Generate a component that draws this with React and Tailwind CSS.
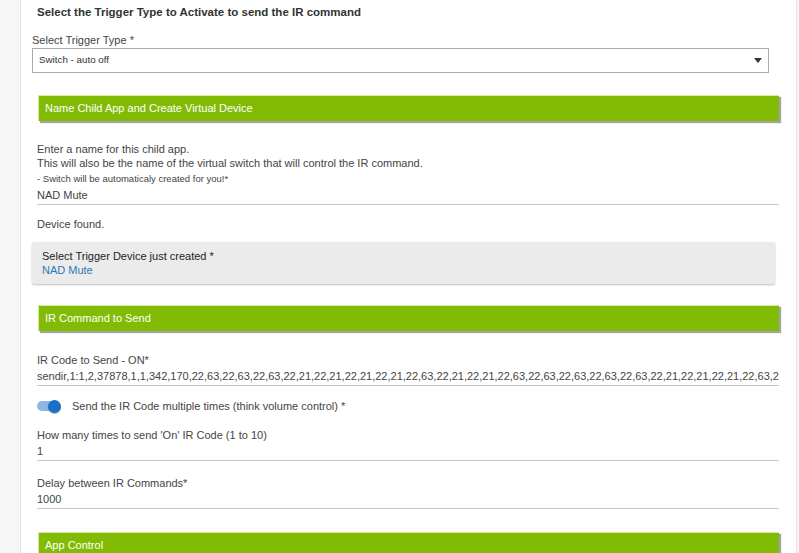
import React from 'react';

const code =
  'sendir,1:1,2,37878,1,1,342,170,22,63,22,63,22,63,22,21,22,21,22,21,22,21,22,63,22,21,22,21,22,63,22,63,22,63,22,63,22,63,22,21,22,21,22,21,22,63,22,2';

function GreenHeader({ title, className = '' }) {
  return (
    <div
      className={`ml-[17px] w-[741px] h-[26px] bg-[#82bb03] border-t border-l border-[#d9ea9c] shadow-[2px_2px_1px_#a3a3a3] flex items-center pl-[6px] text-white text-[11px] ${className}`}
    >
      {title}
    </div>
  );
}

function Field({ label, value, className = '' }) {
  return (
    <div className={`ml-[16px] w-[742px] ${className}`}>
      <div className="h-[16px] leading-[16px]">{label}</div>
      <div className="h-[18px] leading-[17px] border-b border-[#c4c4c4] whitespace-nowrap overflow-hidden">
        {value}
      </div>
    </div>
  );
}

export default function App() {
  return (
    <div
      className="w-[799px] h-[553px] overflow-hidden bg-[#f6f6f6] text-[#444] text-[11px]"
      style={{ fontFamily: '"Liberation Sans", Arial, sans-serif' }}
    >
      <div className="ml-[20px] w-[777px] min-h-[600px] bg-white border-x border-[#e4e4e4]">
        <div className="h-[24px] pt-[4px] pl-[16px] leading-[16px] text-[11.5px] font-bold text-[#333]">
          Select the Trigger Type to Activate to send the IR command
        </div>

        <div className="mt-[9px] h-[15px] leading-[15px] pl-[11px]">Select Trigger Type *</div>
        <div className="ml-[11px] w-[737px] h-[25px] border border-[#a9a9a9] flex items-center justify-between pl-[6px] pr-[6px]">
          <span className="text-[9.8px] text-[#333]">Switch - auto off</span>
          <svg width="8" height="5" viewBox="0 0 8 5">
            <path d="M0 0 L8 0 L4 5 Z" fill="#333" />
          </svg>
        </div>

        <GreenHeader title="Name Child App and Create Virtual Device" className="mt-[22px]" />

        <div className="ml-[16px] w-[742px] mt-[21px]">
          <div className="leading-[14px]">Enter a name for this child app.</div>
          <div className="leading-[14px]">
            This will also be the name of the virtual switch that will control the IR command.
          </div>
          <div className="h-[17px] leading-[17px] text-[9.5px]">- Switch will be automaticaly created for you!*</div>
          <div className="h-[18px] leading-[17px] border-b border-[#c4c4c4]">NAD Mute</div>
        </div>

        <div className="mt-[12px] ml-[16px] leading-[14px]">Device found.</div>

        <div className="mt-[11px] ml-[11px] w-[743px] h-[42px] bg-[#ebebeb] rounded-[2px] shadow-[0_1px_2px_rgba(0,0,0,0.25)] pt-[7px] pl-[10px]">
          <div className="leading-[14px] text-[#222]">Select Trigger Device just created *</div>
          <div className="leading-[14px] text-[#2a79b5]">NAD Mute</div>
        </div>

        <GreenHeader title="IR Command to Send" className="mt-[21px]" />

        <Field label="IR Code to Send - ON*" value={code} className="mt-[21px]" />

        <div className="mt-[12px] ml-[16px] h-[16px] flex items-center">
          <div className="relative w-[24px] h-[14px] flex items-center">
            <div className="w-[21px] h-[10px] rounded-full bg-[#8db6e6]" />
            <div className="absolute left-[11px] top-[0.5px] w-[13px] h-[13px] rounded-full bg-[#1b6fc7] shadow-[0_1px_1px_rgba(0,0,0,0.3)]" />
          </div>
          <span className="ml-[11px]">Send the IR Code multiple times (think volume control) *</span>
        </div>

        <Field label="How many times to send 'On' IR Code (1 to 10)" value="1" className="mt-[13px]" />
        <Field label="Delay between IR Commands*" value="1000" className="mt-[14px]" />

        <GreenHeader title="App Control" className="mt-[23px]" />
      </div>
    </div>
  );
}
